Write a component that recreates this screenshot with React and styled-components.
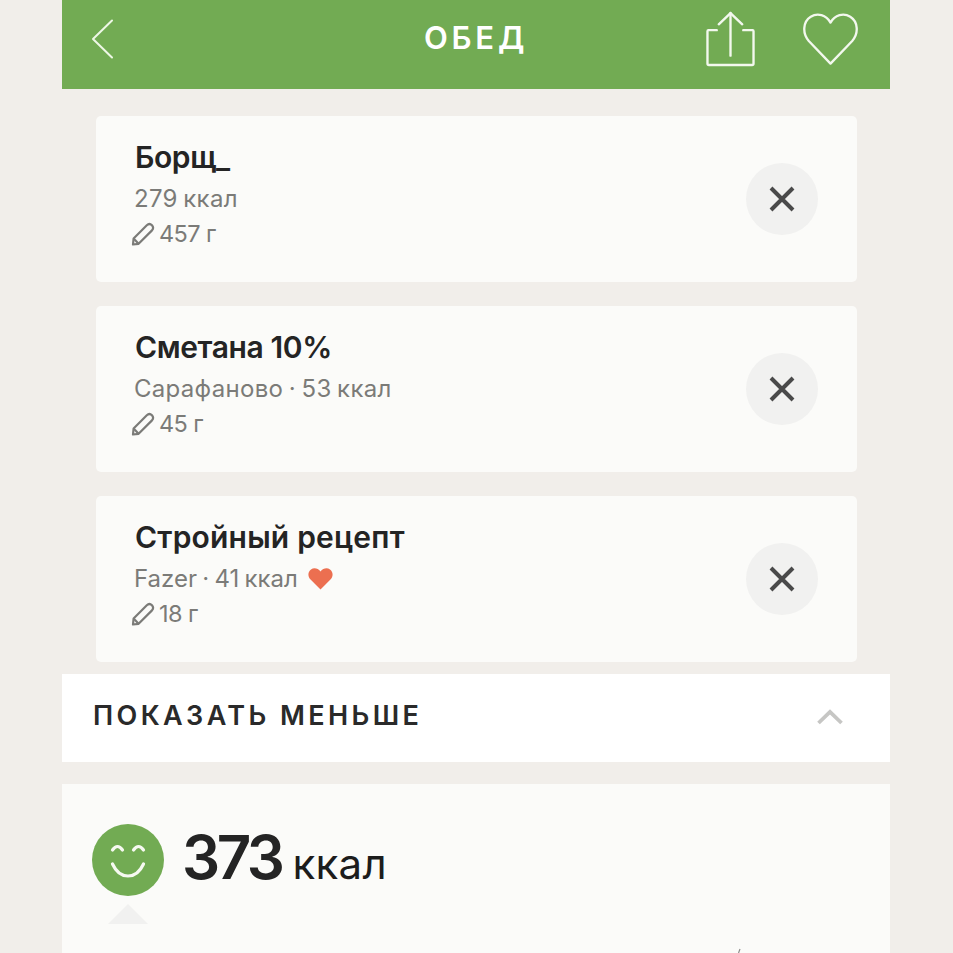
import React from "react";
import styled, { createGlobalStyle } from "styled-components";

const Global = createGlobalStyle`
  html, body { margin: 0; padding: 0; height: 953px; overflow: hidden; background: #f1eeea; }
  * { box-sizing: border-box; }
  body { font-family: Inter, "Noto Sans", sans-serif; }
`;

const Page = styled.div`
  width: 828px;
  margin: 0 0 0 62px;
  display: flex;
  flex-direction: column;
`;
const Header = styled.header`
  height: 89px;
  background: #72ab53;
  display: grid;
  grid-template-columns: 1fr auto 1fr;
  align-items: center;
  padding: 0 32px 0 29px;
`;
const Title = styled.h1`
  margin: 0 0 13px 3px;
  color: #fff;
  font-size: 31px;
  line-height: 36px;
  font-weight: 600;
  letter-spacing: 3.8px;
`;
const HeaderLeft = styled.div`
  display: flex;
  align-items: center;
  height: 78px;
  margin-bottom: 11px;
`;
const HeaderRight = styled.div`
  display: flex;
  justify-content: flex-end;
  align-items: center;
  gap: 48px;
  margin-bottom: 11px;
`;
const List = styled.div`
  display: flex;
  flex-direction: column;
  gap: 24px;
  padding: 27px 33px 12px 34px;
`;
const Card = styled.article`
  height: 166px;
  background: #fbfbf9;
  border-radius: 5px;
  padding: 21px 39px 0 38px;
  display: flex;
  justify-content: space-between;
  align-items: flex-start;
`;
const Info = styled.div`
  display: flex;
  flex-direction: column;
`;
const Name = styled.div`
  font-size: 30px;
  line-height: 40px;
  font-weight: 600;
  color: #242424;
  letter-spacing: ${(p) => p.$spacing}px;
  margin-left: 1px;
`;
const Meta = styled.div`
  display: flex;
  align-items: center;
  font-size: 24px;
  line-height: 34px;
  color: #7b7b78;
  font-weight: 400;
  margin-top: 5px;
  letter-spacing: ${(p) => p.$spacing}px;
  word-spacing: -1.5px;
`;
const Amount = styled.div`
  display: flex;
  align-items: center;
  gap: 4px;
  font-size: 23.5px;
  line-height: 34px;
  color: #7b7b78;
  letter-spacing: -0.6px;
  margin: 1px 0 0 -3px;
`;
const RemoveButton = styled.button`
  width: 72px;
  height: 72px;
  margin-top: 26px;
  border: 0;
  border-radius: 50%;
  background: #f1f1f0;
  display: flex;
  align-items: center;
  justify-content: center;
  padding: 0;
`;
const ToggleRow = styled.div`
  height: 88px;
  background: #fff;
  display: flex;
  align-items: center;
  justify-content: space-between;
  padding: 0 47px 0 31px;
`;
const ToggleLabel = styled.span`
  font-size: 27px;
  line-height: 32px;
  font-weight: 600;
  letter-spacing: 3.4px;
  color: #2a2a2a;
  margin-bottom: 4px;
`;
const ToggleIcon = styled.svg`
  margin-bottom: 2px;
`;
const Stats = styled.section`
  position: relative;
  margin-top: 22px;
  height: 400px;
  background: #fbfbf9;
  padding: 40px 30px 0;
`;
const CalRow = styled.div`
  display: flex;
  align-items: center;
  gap: 20px;
`;
const Calories = styled.div`
  display: flex;
  align-items: baseline;
  gap: 11px;
  color: #242424;
  margin-left: -2px;
  margin-top: -6px;
`;
const CalNumber = styled.span`
  font-size: 60px;
  line-height: 72px;
  font-weight: 600;
  letter-spacing: -3.5px;
`;
const CalUnit = styled.span`
  font-size: 42px;
  font-weight: 400;
  color: #1c1c1c;
  letter-spacing: 0.3px;
`;
const Pointer = styled.div`
  width: 0;
  height: 0;
  margin: 8px 0 0 16px;
  border-left: 20px solid transparent;
  border-right: 20px solid transparent;
  border-bottom: 20px solid #f1f1f0;
`;
const ChartPeek = styled.svg`
  position: absolute;
  left: 675px;
  top: 164px;
`;

const Pencil = () => (
  <svg width="24" height="24" viewBox="0 0 24 24" fill="none" stroke="#7b7b78" strokeWidth="2.2" strokeLinejoin="round">
    <path d="M2 22.5 L2.6 16.6 L15.8 3.2 Q18.4 0.8 21 3.2 Q23.2 5.8 21 8.4 L7.6 21.8 Z" />
    <path d="M2.6 16.6 L7.6 21.8" />
  </svg>
);
const Cross = () => (
  <svg width="26" height="26" viewBox="0 0 26 26" stroke="#4a4a4a" strokeWidth="4" strokeLinecap="butt">
    <path d="M2 2 L24 24 M24 2 L2 24" />
  </svg>
);
const SmallHeart = () => (
  <svg width="25" height="22" viewBox="0 0 25 22" style={{ marginLeft: 10 }}>
    <path fill="#ec6f50" d="M12.5 21.5 L2.3 11.2 C-0.6 8 0 3.4 3 1.4 C6 -0.6 10 0.2 12.5 3.6 C15 0.2 19 -0.6 22 1.4 C25 3.4 25.6 8 22.7 11.2 Z" />
  </svg>
);

const items = [
  { name: "Борщ_", nameSpacing: -0.4, meta: "279 ккал", metaSpacing: 0.3, amount: "457 г" },
  { name: "Сметана 10%", nameSpacing: -0.4, meta: "Сарафаново · 53 ккал", metaSpacing: 0.3, amount: "45 г" },
  { name: "Стройный рецепт", nameSpacing: 0.2, meta: "Fazer · 41 ккал", metaSpacing: 0, amount: "18 г", fav: true },
];

export default function App() {
  return (
    <>
      <Global />
      <Page>
        <Header>
          <HeaderLeft>
            <svg width="23" height="40" viewBox="0 0 23 40" fill="none" stroke="#eef7e6" strokeWidth="2" strokeLinecap="round" strokeLinejoin="round">
              <path d="M21 1.5 L2 20 L21 38.5" />
            </svg>
          </HeaderLeft>
          <Title>ОБЕД</Title>
          <HeaderRight>
            <svg width="49" height="56" viewBox="0 0 50 56" fill="none" stroke="#f3f8ee" strokeWidth="2.4" strokeLinecap="round" strokeLinejoin="round">
              <path d="M11 19 H2.5 Q1.5 19 1.5 20 V53 Q1.5 54.5 3 54.5 H47 Q48.5 54.5 48.5 53 V20 Q48.5 19 47.5 19 H38" />
              <path d="M25 1.5 V45" />
              <path d="M13 13 L25 1.5 L37 13" />
            </svg>
            <svg width="55" height="54" viewBox="0 0 57 54" fill="none" stroke="#f3f8ee" strokeWidth="2.4" strokeLinecap="round" strokeLinejoin="round">
              <path d="M28.5 52.5 L6 29 C-1 21 0 9 8 4 C15 -0.5 24 2 28.5 10 C33 2 42 -0.5 49 4 C57 9 58 21 51 29 Z" />
            </svg>
          </HeaderRight>
        </Header>
        <List>
          {items.map((it) => (
            <Card key={it.name}>
              <Info>
                <Name $spacing={it.nameSpacing}>{it.name}</Name>
                <Meta $spacing={it.metaSpacing}>
                  {it.meta}
                  {it.fav && <SmallHeart />}
                </Meta>
                <Amount>
                  <Pencil />
                  {it.amount}
                </Amount>
              </Info>
              <RemoveButton aria-label="Удалить">
                <Cross />
              </RemoveButton>
            </Card>
          ))}
        </List>
        <ToggleRow>
          <ToggleLabel>ПОКАЗАТЬ МЕНЬШЕ</ToggleLabel>
          <ToggleIcon width="26" height="16" viewBox="0 0 26 16" fill="none" stroke="#c6c6c4" strokeWidth="3.8">
            <path d="M1.5 14 L13 3 L24.5 14" />
          </ToggleIcon>
        </ToggleRow>
        <Stats>
          <CalRow>
            <svg width="72" height="72" viewBox="0 0 72 72">
              <circle cx="36" cy="36" r="36" fill="#72ab53" />
              <g fill="none" stroke="#f6f9f1" strokeWidth="3.2" strokeLinecap="round">
                <path d="M20.5 26 Q25.5 19 30.5 26" />
                <path d="M41.5 26 Q46.5 19 51.5 26" />
                <path d="M20.5 40 Q26 52 36 52 Q46 52 51.5 40" />
              </g>
            </svg>
            <Calories>
              <CalNumber>373</CalNumber>
              <CalUnit>ккал</CalUnit>
            </Calories>
          </CalRow>
          <Pointer />
          <ChartPeek width="6" height="6" viewBox="0 0 6 6" fill="none" stroke="#8a8a88" strokeWidth="1.2">
            <path d="M3 1 L1.5 5" />
          </ChartPeek>
        </Stats>
      </Page>
    </>
  );
}
